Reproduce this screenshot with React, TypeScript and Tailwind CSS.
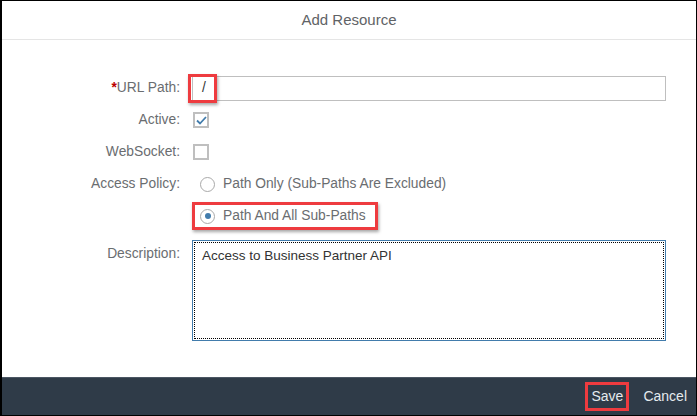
const FONT = { fontFamily: '"Liberation Sans", Arial, sans-serif' }

function Label({ children, required }: { children: React.ReactNode; required?: boolean }) {
  return (
    <div className="w-[178px] shrink-0 text-right text-[13.8px] text-[#6a6d70]">
      {required && <span className="text-[#bb0000] font-bold">*</span>}
      {children}
    </div>
  )
}

function Checkbox({ checked }: { checked?: boolean }) {
  return (
    <div className="ml-px w-4 h-4 border-2 border-[#bfbfbf] bg-white flex items-center justify-center">
      {checked && (
        <svg width="11" height="9" viewBox="0 0 11 9">
          <path d="M1 4.5 L4 7.5 L10 1" fill="none" stroke="#427cac" strokeWidth="1.8" />
        </svg>
      )}
    </div>
  )
}

function Radio({ selected }: { selected?: boolean }) {
  return (
    <div className="w-[15px] h-[15px] rounded-full border border-[#a9a9a9] bg-white flex items-center justify-center">
      {selected && <div className="w-[6px] h-[6px] rounded-full bg-[#427cac]" />}
    </div>
  )
}

export default function App() {
  return (
    <div
      className="w-[697px] h-[416px] bg-white border-l-2 border-y border-r border-black flex flex-col"
      style={FONT}
    >
      {/* Заголовок */}
      <div className="h-[39px] shrink-0 border-b border-[#e5e5e5] flex items-center justify-center pt-px text-[15px] text-[#5f6366]">
        Add Resource
      </div>

      {/* Форма */}
      <div className="flex-1 pt-[32px] flex flex-col">
        <div className="h-8 flex items-center gap-3">
          <Label required>URL Path:</Label>
          <div className="relative">
            <div className="w-[474px] h-[25px] border border-[#bfbfbf] bg-white flex items-center pl-[9px] text-[13.8px] text-[#333]">
              /
            </div>
            <div className="absolute left-[-4px] top-[-2px] w-[29px] h-[29px] border-[3px] border-[#ee3b3f] shadow-[1px_2px_3px_rgba(0,0,0,0.35)]" />
          </div>
        </div>

        <div className="h-8 flex items-center gap-3">
          <Label>Active:</Label>
          <Checkbox checked />
        </div>

        <div className="h-8 flex items-center gap-3">
          <Label>WebSocket:</Label>
          <Checkbox />
        </div>

        <div className="h-8 flex items-center gap-3">
          <Label>Access Policy:</Label>
          <div className="flex items-center gap-[8px] pl-2 text-[13.8px] text-[#6a6d70]">
            <Radio />
            <span>Path Only (Sub-Paths Are Excluded)</span>
          </div>
        </div>

        <div className="h-8 flex items-center gap-3">
          <div className="w-[178px] shrink-0" />
          <div className="relative flex items-center gap-[8px] pl-2 pr-[12px] h-[28px] text-[13.8px] text-[#6a6d70]">
            <Radio selected />
            <span>Path And All Sub-Paths</span>
            <div className="absolute inset-0 border-[3px] border-[#ee3b3f] shadow-[1px_2px_3px_rgba(0,0,0,0.35)]" />
          </div>
        </div>

        <div className="mt-2 flex gap-3">
          <div className="pt-[4px] w-[178px] shrink-0">
            <Label>Description:</Label>
          </div>
          <div className="w-[474px] h-[101px] border border-[#427cac] p-px">
            <div className="w-full h-full border border-dotted border-black px-[7px] pt-[3px] text-[13.5px] text-[#333]">
              Access to Business Partner API
            </div>
          </div>
        </div>
      </div>

      {/* Подвал */}
      <div className="h-[38px] shrink-0 bg-[#2f3b48] border-t border-[#4b5663] flex items-center justify-end pr-[7px] gap-[12px] text-[14px] text-[#e5eaee]">
        <div className="relative w-[44px] h-[29px] flex items-center justify-center">
          Save
          <div className="absolute inset-0 border-[3px] border-[#ee3b3f]" />
        </div>
        <div className="px-[2px]">Cancel</div>
      </div>
    </div>
  )
}
